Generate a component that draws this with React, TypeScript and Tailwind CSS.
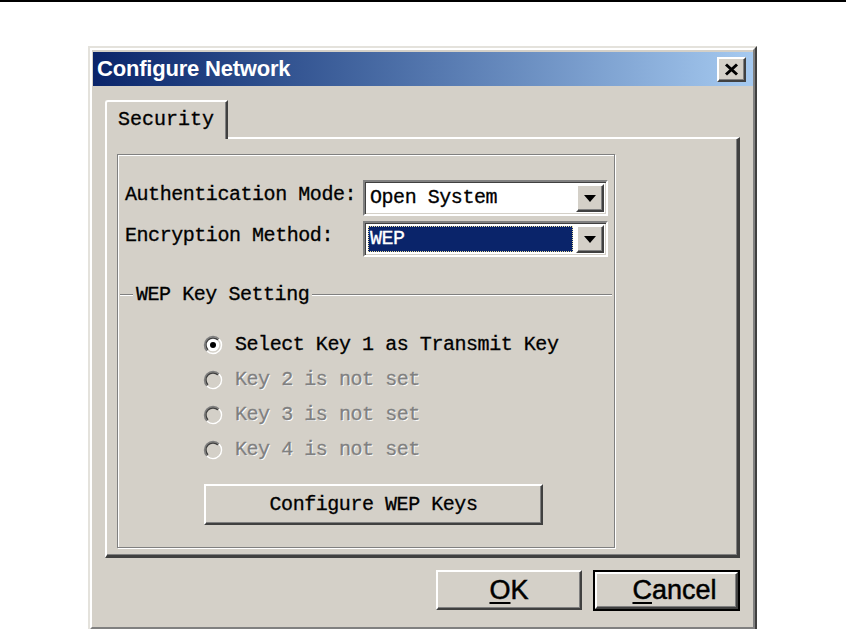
import React from "react";

const mono =
  "font-['Liberation_Mono',monospace] text-[20px] tracking-[-0.45px] leading-none [-webkit-text-stroke:0.3px_currentColor]";
const raised =
  "border-t-2 border-l-2 border-r-2 border-b-2 border-t-white border-l-white border-r-[#404040] border-b-[#404040] shadow-[inset_-1px_-1px_0_#808080] bg-[#D4D0C8]";

function Radio({ checked, disabled }: { checked?: boolean; disabled?: boolean }) {
  return (
    <svg width="20" height="20" viewBox="0 0 20 20" className="shrink-0">
      <circle cx="10" cy="10" r="8.5" fill={disabled ? "#D4D0C8" : "#ffffff"} />
      <path d="M3.99 16.01 A8.5 8.5 0 0 1 16.01 3.99" stroke="#808080" strokeWidth="1.6" fill="none" />
      <path d="M16.01 3.99 A8.5 8.5 0 0 1 3.99 16.01" stroke="#ffffff" strokeWidth="1.6" fill="none" />
      <path d="M5.05 14.95 A7 7 0 0 1 14.95 5.05" stroke="#404040" strokeWidth="1.4" fill="none" />
      <path d="M14.95 5.05 A7 7 0 0 1 5.05 14.95" stroke="#D4D0C8" strokeWidth="1.4" fill="none" />
      {checked && <circle cx="10" cy="10" r="3" fill="#000" />}
    </svg>
  );
}

function DropButton() {
  return (
    <div className={`${raised} w-[28px] h-full flex items-center justify-center`}>
      <svg width="12" height="7" viewBox="0 0 12 7">
        <polygon points="0,0 12,0 6,7" fill="#000" />
      </svg>
    </div>
  );
}

function Combo({ value, selected }: { value: string; selected?: boolean }) {
  return (
    <div className="w-[245px] h-[36px] border-2 border-t-[#808080] border-l-[#808080] border-r-white border-b-white shadow-[inset_1px_1px_0_#404040,inset_-1px_-1px_0_#D4D0C8] bg-white flex items-stretch p-[2px]">
      <div className="flex-1 flex items-center pr-[3px] pl-[1px] py-[1px]">
        {selected ? (
          <div className="w-full h-full bg-[#0A246A] border border-dotted border-[#e8dc9c] flex items-center pl-[1px]">
            <span className={`${mono} text-white`}>{value}</span>
          </div>
        ) : (
          <span className={`${mono} text-black pl-[2px]`}>{value}</span>
        )}
      </div>
      <DropButton />
    </div>
  );
}

function RadioRow({ label, checked, disabled }: { label: string; checked?: boolean; disabled?: boolean }) {
  return (
    <div className="h-[35px] flex items-center gap-[12px]">
      <Radio checked={checked} disabled={disabled} />
      <span
        className={`${mono} ${
          disabled ? "text-[#808080] [text-shadow:1px_1px_0_#ffffff]" : "text-black"
        }`}
      >
        {label}
      </span>
    </div>
  );
}

export default function App() {
  return (
    <div className="w-[846px] h-[629px] bg-white overflow-hidden">
      <div className="h-[2px] bg-black" />
      <div className="ml-[88px] mt-[44px] w-[669px] h-[585px] border-2 border-t-[#e4e2dc] border-l-[#e4e2dc] border-r-[#404040] border-b-[#404040] bg-[#D4D0C8]">
        <div className="h-full border-2 border-t-white border-l-white border-r-[#808080] border-b-[#808080] pt-[2px] pl-[1px] flex flex-col">
          {/* Title bar */}
          <div className="h-[34px] bg-gradient-to-r from-[#0A246A] to-[#A6CAF0] flex items-center justify-between pl-[4px] pr-[7px]">
            <span className="font-['Liberation_Sans',Arial,sans-serif] font-bold text-[22px] text-white leading-none tracking-[-0.2px]">
              Configure Network
            </span>
            <div className={`${raised} w-[29px] h-[25px] flex items-center justify-center`}>
              <svg width="15" height="13" viewBox="0 0 15 13">
                <path d="M2 1.5 L13 11.5 M13 1.5 L2 11.5" stroke="#000" strokeWidth="3" />
              </svg>
            </div>
          </div>

          {/* Body */}
          <div className="flex-1 flex flex-col pl-[12px] pr-[13px] pt-[14px]">
            {/* Tab */}
            <div className="relative z-10 -mb-[2px] w-[123px] h-[39px] border-t-2 border-l-2 border-t-white border-l-white border-r-2 border-r-[#404040] shadow-[inset_-1px_0_0_#808080] rounded-tl-[3px] bg-[#D4D0C8] flex items-center pl-[11px] pb-[1px]">
              <span className={`${mono} text-black tracking-[0px]`}>Security</span>
            </div>
            {/* Panel */}
            <div className="h-[421px] border-t-2 border-l-2 border-t-white border-l-white border-r-[3px] border-b-[3px] border-r-[#404040] border-b-[#404040] shadow-[inset_-1px_-1px_0_#808080] pl-[10px] pt-[15px]">
              <div className="w-[498px] h-[394px] border border-[#808080] shadow-[1px_1px_0_#ffffff,inset_1px_1px_0_#ffffff] flex flex-col">
                <div className="pt-[25px] pl-[7px] flex flex-col gap-[5px]">
                  <div className="flex items-center">
                    <span className={`${mono} w-[238px] text-black mb-[6px]`}>Authentication Mode:</span>
                    <Combo value="Open System" />
                  </div>
                  <div className="flex items-center">
                    <span className={`${mono} w-[238px] text-black mb-[6px]`}>Encryption Method:</span>
                    <Combo value="WEP" selected />
                  </div>
                </div>

                {/* Group header */}
                <div className="mt-[28px] h-[20px] flex items-center pl-[2px] pr-[2px] gap-[3px]">
                  <div className="w-[13px] h-[2px] border-t border-t-[#808080] border-b border-b-white" />
                  <span className={`${mono} text-black`}>WEP Key Setting</span>
                  <div className="flex-1 h-[2px] border-t border-t-[#808080] border-b border-b-white" />
                </div>

                <div className="mt-[22px] pl-[85px] flex flex-col">
                  <RadioRow label="Select Key 1 as Transmit Key" checked />
                  <RadioRow label="Key 2 is not set" disabled />
                  <RadioRow label="Key 3 is not set" disabled />
                  <RadioRow label="Key 4 is not set" disabled />
                </div>

                <div className="mt-[17px] pl-[86px]">
                  <div className={`${raised} w-[339px] h-[41px] flex items-center justify-center`}>
                    <span className={`${mono} text-black`}>Configure WEP Keys</span>
                  </div>
                </div>
              </div>
            </div>

            {/* Buttons */}
            <div className="mt-[12px] flex justify-end gap-[11px]">
              <div className={`${raised} w-[146px] h-[40px] flex items-center justify-center`}>
                <span className="font-['Liberation_Sans',Arial,sans-serif] text-[27px] leading-none text-black [-webkit-text-stroke:0.5px_black]">
                  <span className="underline underline-offset-[3px] decoration-2">O</span>K
                </span>
              </div>
              <div className="w-[147px] h-[41px] border-2 border-black">
                <div className={`${raised} w-full h-full flex items-center justify-center pl-[16px]`}>
                  <span className="font-['Liberation_Sans',Arial,sans-serif] text-[27px] leading-none text-black [-webkit-text-stroke:0.5px_black]">
                    <span className="underline underline-offset-[3px] decoration-2">C</span>ancel
                  </span>
                </div>
              </div>
            </div>
          </div>
        </div>
      </div>
    </div>
  );
}
